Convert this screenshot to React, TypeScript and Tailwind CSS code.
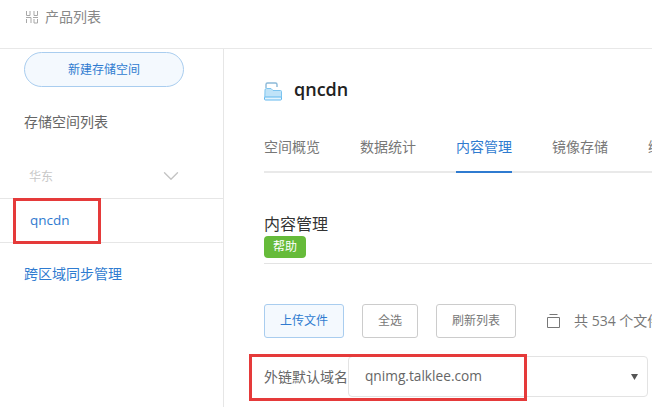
import { ChevronDown } from "lucide-react";

const font = { fontFamily: '"Open Sans", "Noto Sans CJK SC", sans-serif' };

const tabs = ["空间概览", "数据统计", "内容管理", "镜像存储", "绑定域名"];

const GridIcon = () => (
  <svg width="14" height="14" viewBox="0 0 14 14" fill="none" stroke="#a8a8a8" strokeWidth="1">
    <path d="M1.5 1v4.5h3.5V1M9 1v4.5h3.5V1M1 7.5h5V13M8 7.5h5M9 9v4h3.5V9M1.5 9v4" />
  </svg>
);

const FolderIcon = () => (
  <svg width="18" height="19" viewBox="0 0 18 19" fill="none" className="mt-[5px]">
    <path d="M2 6V2.500A1.500 1.500 0 0 1 3.500 1h8A1.500 1.500 0 0 1 13 2.500V5" stroke="#8cb9d8" strokeWidth="1.4" />
    <path d="M1 8a1.500 1.500 0 0 1 1.500-1.500H7l2 2h7.500A1 1 0 0 1 17.500 9.500V16H.8z" fill="#bfe3f8" stroke="#7cc4ef" />
    <rect x="0.500" y="15" width="17" height="3" rx="1" fill="#e3f4fd" stroke="#62b8ee" />
  </svg>
);

const BoxIcon = () => (
  <svg width="15" height="15" viewBox="0 0 15 15" fill="none" stroke="#777" strokeWidth="1">
    <path d="M3.500 .5h8M1.500 3.500h12M1.500 3.500v10h12v-10" />
  </svg>
);

const Sidebar = () => (
  <aside className="w-[224px] shrink-0 border-r border-[#e6e6e6]">
    <div className="px-6 pt-[3px]">
      <button className="h-[35px] w-40 rounded-full border border-[#a9cdef] bg-[#f4f9fe] text-xs text-[#2f7bd0]">
        新建存储空间
      </button>
      <p className="mt-[25px] text-sm leading-5 text-[#666]">存储空间列表</p>
    </div>
    <div className="mt-[33px] flex h-[34px] items-start justify-between border-b border-[#e6e6e6] pl-[29px] pr-[39px]">
      <span className="mt-0.5 text-xs leading-5 text-[#c8c8c8]">华东</span>
      <ChevronDown className="-mt-0.5 size-[26px] text-[#c4c4c4]" strokeWidth={1.25} />
    </div>
    <div className="flex h-[44px] items-center border-b border-[#e6e6e6] pl-[30px] text-[13.500px] text-[#2f7bd0]">
      qncdn
    </div>
    <p className="mt-[21px] pl-6 text-sm leading-5 text-[#2f7bd0]">跨区域同步管理</p>
  </aside>
);

const Main = () => (
  <main className="min-w-0 flex-1 overflow-hidden pl-10">
    <div className="flex items-center gap-3 pt-[28px]">
      <FolderIcon />
      <h1 className="text-lg font-semibold leading-6 text-[#222]">qncdn</h1>
    </div>
    <nav className="mt-[36px] flex w-[600px] gap-10 border-b-2 border-[#e9e9e9]">
      {tabs.map((tab) => (
        <span
          key={tab}
          className={
            tab === "内容管理"
              ? "-mb-0.5 shrink-0 border-b-2 border-[#2f7bd0] pb-[14px] text-sm leading-5 text-[#2f7bd0]"
              : "-mb-0.5 shrink-0 pb-[14px] text-sm leading-5 text-[#777]"
          }
        >
          {tab}
        </span>
      ))}
    </nav>
    <h2 className="mt-[41px] text-base leading-5 text-[#333]">内容管理</h2>
    <div className="w-[600px] border-b border-[#e3e3e3] pb-[5px] pt-0.5">
      <span className="flex h-[22px] w-[42px] items-center justify-center rounded bg-[#66bb3a] text-xs text-white">
        帮助
      </span>
    </div>
    <div className="mt-10 flex items-center whitespace-nowrap">
      <button className="h-[34px] w-20 shrink-0 rounded-[3px] border border-[#a9cdef] bg-[#f4f9fe] text-xs text-[#2f7bd0]">
        上传文件
      </button>
      <button className="ml-[18px] h-[34px] w-14 shrink-0 rounded-[3px] border border-[#ccc] text-xs text-[#777]">
        全选
      </button>
      <button className="ml-[18px] h-[34px] w-20 shrink-0 rounded-[3px] border border-[#ccc] text-xs text-[#777]">
        刷新列表
      </button>
      <span className="ml-[30px] shrink-0">
        <BoxIcon />
      </span>
      <span className="ml-[13px] shrink-0 text-sm text-[#777]">共 534 个文件</span>
    </div>
    <div className="mt-[18px] flex h-[41px] w-[384px] items-center">
      <span className="w-[84px] shrink-0 text-sm text-[#666]">外链默认域名</span>
      <div className="flex h-full flex-1 items-center justify-between rounded border border-[#e3e3e3] pl-4 pr-[9px]">
        <span className="text-[13.700px] text-[#666]">qnimg.talklee.com</span>
        <svg width="7" height="6" viewBox="0 0 7 6" className="fill-[#555]">
          <path d="M0 0h7L3.500 6z" />
        </svg>
      </div>
    </div>
  </main>
);

export default function App() {
  return (
    <div className="relative flex h-[407px] w-[652px] flex-col overflow-hidden bg-white" style={font}>
      <header className="flex h-[49px] shrink-0 items-start gap-[6px] border-b border-[#e8e8e8] pl-[25px] pt-[9px]">
        <span className="mt-[1px]">
          <GridIcon />
        </span>
        <span className="text-sm leading-[15px] text-[#888]">产品列表</span>
      </header>
      <div className="flex min-h-0 flex-1">
        <Sidebar />
        <Main />
      </div>
      <div className="absolute left-[13px] top-[198px] h-[46px] w-[88px] border-[3px] border-[#e53a3a]" />
      <div className="absolute left-[249px] top-[354px] h-[47px] w-[278px] border-[3px] border-[#e53a3a]" />
    </div>
  );
}
